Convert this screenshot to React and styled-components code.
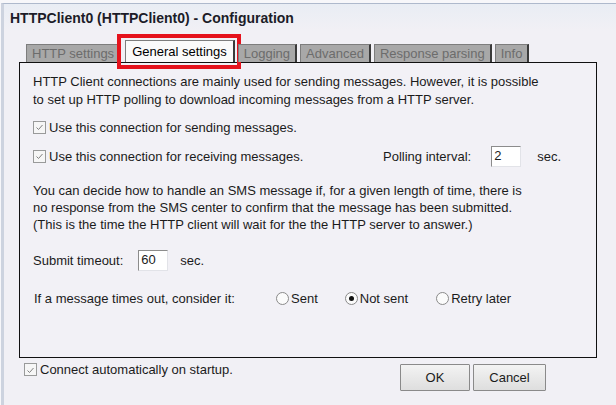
import React from 'react';
import styled, { createGlobalStyle } from 'styled-components';

const GlobalStyle = createGlobalStyle`
  html, body {
    margin: 0;
    padding: 0;
    background: #f7f7fa;
  }
  body {
    font-family: "Liberation Sans", Arial, sans-serif;
    color: #1b1b1b;
  }
`;

const Page = styled.div`
  width: 616px;
  height: 405px;
  padding: 3px 0 0 1px;
  box-sizing: border-box;
  overflow: hidden;
`;

const Window = styled.div`
  height: 402px;
  border-top: 1px solid #aeb9cc;
  border-left: 3px solid #cdd3df;
  background: #f1f0f5;
  box-sizing: border-box;
`;

const TitleBar = styled.div`
  height: 27px;
  padding-left: 6px;
  display: flex;
  align-items: center;
  font-size: 14px;
  font-weight: bold;
  color: #1c1c28;
  background: linear-gradient(#e9edf4, #f1f0f5);
`;

const TabBar = styled.div`
  height: 31px;
  display: flex;
  align-items: flex-end;
  gap: 3px;
  padding-left: 22px;
`;

const Tab = styled.div`
  position: relative;
  height: ${(p) => (p.$active ? 21 : 17)}px;
  line-height: ${(p) => (p.$active ? 21 : 17)}px;
  padding: 0 ${(p) => (p.$active ? 6 : 5)}px;
  margin-left: ${(p) => (p.$active ? 1 : 0)}px;
  font-size: 13px;
  color: ${(p) => (p.$active ? '#000' : '#6c6c6c')};
  background: ${(p) => (p.$active ? '#fafafa' : '#a8a8a8')};
  border: 1px solid #7d7d7d;
  border-right: 2px solid #3a3a3a;
  border-bottom: none;
  white-space: nowrap;

  ${(p) =>
    p.$highlight &&
    `
    &::after {
      content: '';
      position: absolute;
      left: -9px;
      right: -8px;
      top: -7px;
      bottom: -7px;
      border: 4px solid #e5121c;
    }
  `}
`;

const Panel = styled.div`
  width: 578px;
  height: 296px;
  margin-left: 15px;
  border: 1px solid #111;
  box-sizing: border-box;
  padding: 10px 13px 0 13px;
  font-size: 13px;
  background: #f2f1f6;
  display: flex;
  flex-direction: column;
`;

const Para = styled.p`
  margin: ${(p) => p.$mt || 0}px 0 0 0;
  line-height: ${(p) => p.$lh || 18}px;
`;

const Row = styled.div`
  display: flex;
  align-items: center;
  height: ${(p) => p.$h || 22}px;
  margin-top: ${(p) => p.$mt || 0}px;
`;

const CheckItem = styled.label`
  display: flex;
  align-items: center;
  gap: 3px;
`;

const Box = styled.span`
  width: 11px;
  height: 11px;
  border: 1px solid #999a9a;
  background: #f6f6f6;
  display: inline-flex;
  align-items: center;
  justify-content: center;
`;

const Radio = styled.span`
  width: 11px;
  height: 11px;
  border: 1px solid #8a8a8a;
  border-radius: 50%;
  background: #fbfbfb;
  display: inline-flex;
  align-items: center;
  justify-content: center;

  &::after {
    content: '';
    width: 5px;
    height: 5px;
    border-radius: 50%;
    background: ${(p) => (p.$checked ? '#111' : 'transparent')};
  }
`;

const RadioItem = styled.label`
  display: flex;
  align-items: center;
  gap: 2px;
  margin-right: ${(p) => p.$mr || 0}px;
`;

const Label = styled.span`
  width: ${(p) => (p.$w ? `${p.$w}px` : 'auto')};
  margin-left: ${(p) => p.$ml || 0}px;
`;

const NumField = styled.div`
  width: 30px;
  height: 21px;
  box-sizing: border-box;
  margin: 0 ${(p) => p.$mr || 12}px 0 ${(p) => p.$ml || 15}px;
  padding: 1px 0 0 2px;
  font-size: 13px;
  line-height: 15px;
  background: #fff;
  border: 1px solid #e2e3e8;
  border-top-color: #8c8c8c;
  border-left-color: #8c8c8c;
`;

const PollGroup = styled.div`
  margin-left: auto;
  margin-right: 22px;
  display: flex;
  align-items: center;
`;

const Footer = styled.div`
  display: flex;
  align-items: flex-start;
  padding: 4px 0 0 20px;
  font-size: 13px;
`;

const Buttons = styled.div`
  margin-left: auto;
  margin-right: 70px;
  margin-top: 2px;
  display: flex;
  gap: 3px;
`;

const Button = styled.button`
  width: ${(p) => p.$w}px;
  height: 27px;
  font-family: "Liberation Sans", Arial, sans-serif;
  font-size: 13px;
  color: #1b1b1b;
  background: linear-gradient(#f3f3f3, #dedede);
  border: 1px solid #8a8a8a;
  border-radius: 1px;
  padding: 0;
`;

const Check = () => (
  <Box>
    <svg width="9" height="8" viewBox="0 0 9 8">
      <path d="M1.5 4.5 L3.5 6.5 L7.5 2" fill="none" stroke="#808080" strokeWidth="1" />
    </svg>
  </Box>
);

const tabs = [
  'HTTP settings',
  'General settings',
  'Logging',
  'Advanced',
  'Response parsing',
  'Info',
];

export default function App() {
  return (
    <Page>
      <GlobalStyle />
      <Window>
        <TitleBar>HTTPClient0 (HTTPClient0) - Configuration</TitleBar>
        <TabBar>
          {tabs.map((t, i) => (
            <Tab key={t} $active={i === 1} $highlight={i === 1}>
              {t}
            </Tab>
          ))}
        </TabBar>
        <Panel>
          <Para>
            HTTP Client connections are mainly used for sending messages. However, it is possible
            <br />
            to set up HTTP polling to download incoming messages from a HTTP server.
          </Para>
          <Row $mt={7}>
            <CheckItem>
              <Check />
              Use this connection for sending messages.
            </CheckItem>
          </Row>
          <Row $mt={7}>
            <CheckItem>
              <Check />
              Use this connection for receiving messages.
            </CheckItem>
            <PollGroup>
              <span>Polling interval:</span>
              <NumField $ml={20} $mr={16}>2</NumField>
              <span>sec.</span>
            </PollGroup>
          </Row>
          <Para $mt={15} $lh={17}>
            You can decide how to handle an SMS message if, for a given length of time, there is
            <br />
            no response from the SMS center to confirm that the message has been submitted.
            <br />
            (This is the time the HTTP client will wait for the the HTTP server to answer.)
          </Para>
          <Row $mt={16}>
            <span>Submit timeout:</span>
            <NumField>60</NumField>
            <span>sec.</span>
          </Row>
          <Row $mt={16}>
            <Label $w={242} $ml={1}>If a message times out, consider it:</Label>
            <RadioItem $mr={27}>
              <Radio />
              Sent
            </RadioItem>
            <RadioItem $mr={28}>
              <Radio $checked />
              Not sent
            </RadioItem>
            <RadioItem>
              <Radio />
              Retry later
            </RadioItem>
          </Row>
        </Panel>
        <Footer>
          <CheckItem>
            <Check />
            Connect automatically on startup.
          </CheckItem>
          <Buttons>
            <Button $w={70}>OK</Button>
            <Button $w={73}>Cancel</Button>
          </Buttons>
        </Footer>
      </Window>
    </Page>
  );
}
